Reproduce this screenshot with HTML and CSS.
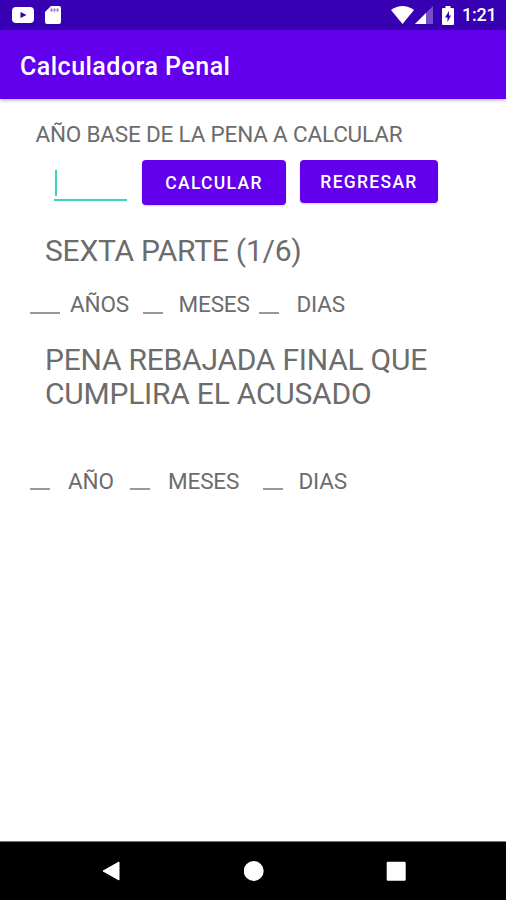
FILE: index.html
```html
<!DOCTYPE html>
<html lang="es">
<head>
<meta charset="utf-8">
<title>Calculadora Penal</title>
<link rel="stylesheet" href="styles.css">
</head>
<body>
<div class="screen">
  <header class="status">
    <svg class="yt" viewBox="0 0 22 16"><rect width="22" height="16" rx="4" fill="#fff"/><path d="M8.500 5v6l6-3z" fill="#3700b3"/></svg>
    <svg class="sd" viewBox="0 0 16 20"><path d="M6 1h8a2 2 0 0 1 2 2v14a2 2 0 0 1-2 2H2a2 2 0 0 1-2-2V7z" fill="#fff"/><path d="M6.500 3.500v3M9.500 3.500v3M12.500 3.500v3" stroke="#8968d2" stroke-width="1.800"/></svg>
    <span class="spacer"></span>
    <svg class="wifi" viewBox="0 0 23 18"><path d="M0 4Q11.500-4 23 4L11.500 18z" fill="#fff"/></svg>
    <svg class="signal" viewBox="0 0 18 18"><path d="M18 0v18H0z" fill="#7650ca"/><path d="M11 7v11H0z" fill="#fff"/></svg>
    <svg class="battery" viewBox="0 0 12 19"><path d="M3.500 0h5v2H11q1 0 1 1v15q0 1-1 1H1q-1 0-1-1V3q0-1 1-1h2.500z" fill="#fff"/><path d="M7 5L3 11.500H5.500V16L9 9.500H7z" fill="#3700b3"/></svg>
    <span class="clock">1:21</span>
  </header>
  <div class="appbar"><h1>Calculadora Penal</h1></div>
  <main>
    <p class="label">AÑO BASE DE LA PENA A CALCULAR</p>
    <div class="form">
      <div class="input"><span class="caret"></span></div>
      <button class="calculate">CALCULAR</button>
      <button class="back">REGRESAR</button>
    </div>
    <h2 class="sixth">SEXTA PARTE (1/6)</h2>
    <div class="result first"><i class="wide"></i><span>AÑOS</span><i></i><span>MESES</span><i></i><span>DIAS</span></div>
    <h2 class="final">PENA REBAJADA FINAL QUE<br>CUMPLIRA EL ACUSADO</h2>
    <div class="result second"><i></i><span>AÑO</span><i></i><span>MESES</span><i></i><span>DIAS</span></div>
  </main>
  <nav>
    <svg viewBox="0 0 20 20"><path d="M18 1v18L2 10z" fill="#fff" stroke="#fff" stroke-linejoin="round"/></svg>
    <svg viewBox="0 0 20 20"><circle cx="9.700" cy="10" r="10" fill="#fff"/></svg>
    <svg viewBox="0 0 20 20"><rect x=".7" y=".7" width="19" height="19" rx="1.200" fill="#fff"/></svg>
  </nav>
</div>
</body>
</html>
```
FILE: styles.css
```css
* { box-sizing: border-box; }
body { margin: 0; font-family: Roboto, sans-serif; background: #fff; }
h1, h2, p { margin: 0; font-weight: 400; }
.screen { width: 506px; height: 900px; display: flex; flex-direction: column; overflow: hidden; }
.status { height: 30px; flex: none; background: #3700b3; display: flex; align-items: center; padding: 0 10px 0 12px; }
.yt { width: 22px; height: 16px; }
.sd { width: 16px; height: 20px; margin-left: 11px; }
.spacer { flex: 1; }
.wifi { width: 23px; height: 18px; }
.signal { width: 18px; height: 18px; margin-left: 1px; }
.battery { width: 12px; height: 19px; margin-left: 9px; }
.clock { color: #fff; font-size: 18px; font-weight: 500; line-height: 32px; width: 34px; margin-left: 8px; letter-spacing: -.2px; white-space: nowrap; }
.appbar { height: 69px; flex: none; background: #6200ee; padding: 0 20px; box-shadow: 0 1px 4px #0005; }
h1 { color: #fff; font-size: 25px; font-weight: 500; letter-spacing: .48px; line-height: 73px; white-space: nowrap; }
main { flex: 1; color: #6c6c6c; }
.label { font-size: 22.500px; letter-spacing: -.19px; line-height: 28px; margin: 21px 0 0 35.500px; white-space: nowrap; }
.form { display: flex; margin: 12px 0 0 54px; height: 46px; }
.input { width: 73px; height: 41px; border-bottom: 2px solid #38d3bf; padding: 10px 0 0 1px; }
.caret { display: block; width: 2px; height: 26px; background: #38d3bf; }
button { border: 0; border-radius: 4px; background: #6200ee; color: #fff; font: 500 17.500px Roboto, sans-serif; letter-spacing: 1.300px; padding: 1px 0 0; box-shadow: 0 1px 2px #0003; }
.calculate { width: 144px; height: 45px; margin-left: 15px; }
.back { width: 138px; height: 43px; margin-left: 14px; }
h2 { font-size: 30px; letter-spacing: -.23px; line-height: 34px; margin-left: 45px; white-space: nowrap; }
.sixth { margin-top: 28px; }
.result { display: grid; font-size: 22.500px; letter-spacing: -.15px; line-height: 28px; margin-left: 30px; white-space: nowrap; }
.result i { width: 20px; height: 2px; margin-top: 22px; background: #999; }
.result .wide { width: 30px; }
.first { grid-template-columns: 40px 73px 35.500px 80.500px 37.500px 60px; margin-top: 22px; }
.final { margin-top: 25px; }
.second { grid-template-columns: 38px 62px 38px 95px 35.500px 60px; margin-top: 56px; }
.second i { margin-top: 21px; }
nav { height: 59px; flex: none; background: #000; border-top: 1px solid #777; display: flex; justify-content: space-between; align-items: center; padding: 0 100px 0 101px; }
nav svg { width: 20px; height: 20px; }
```
